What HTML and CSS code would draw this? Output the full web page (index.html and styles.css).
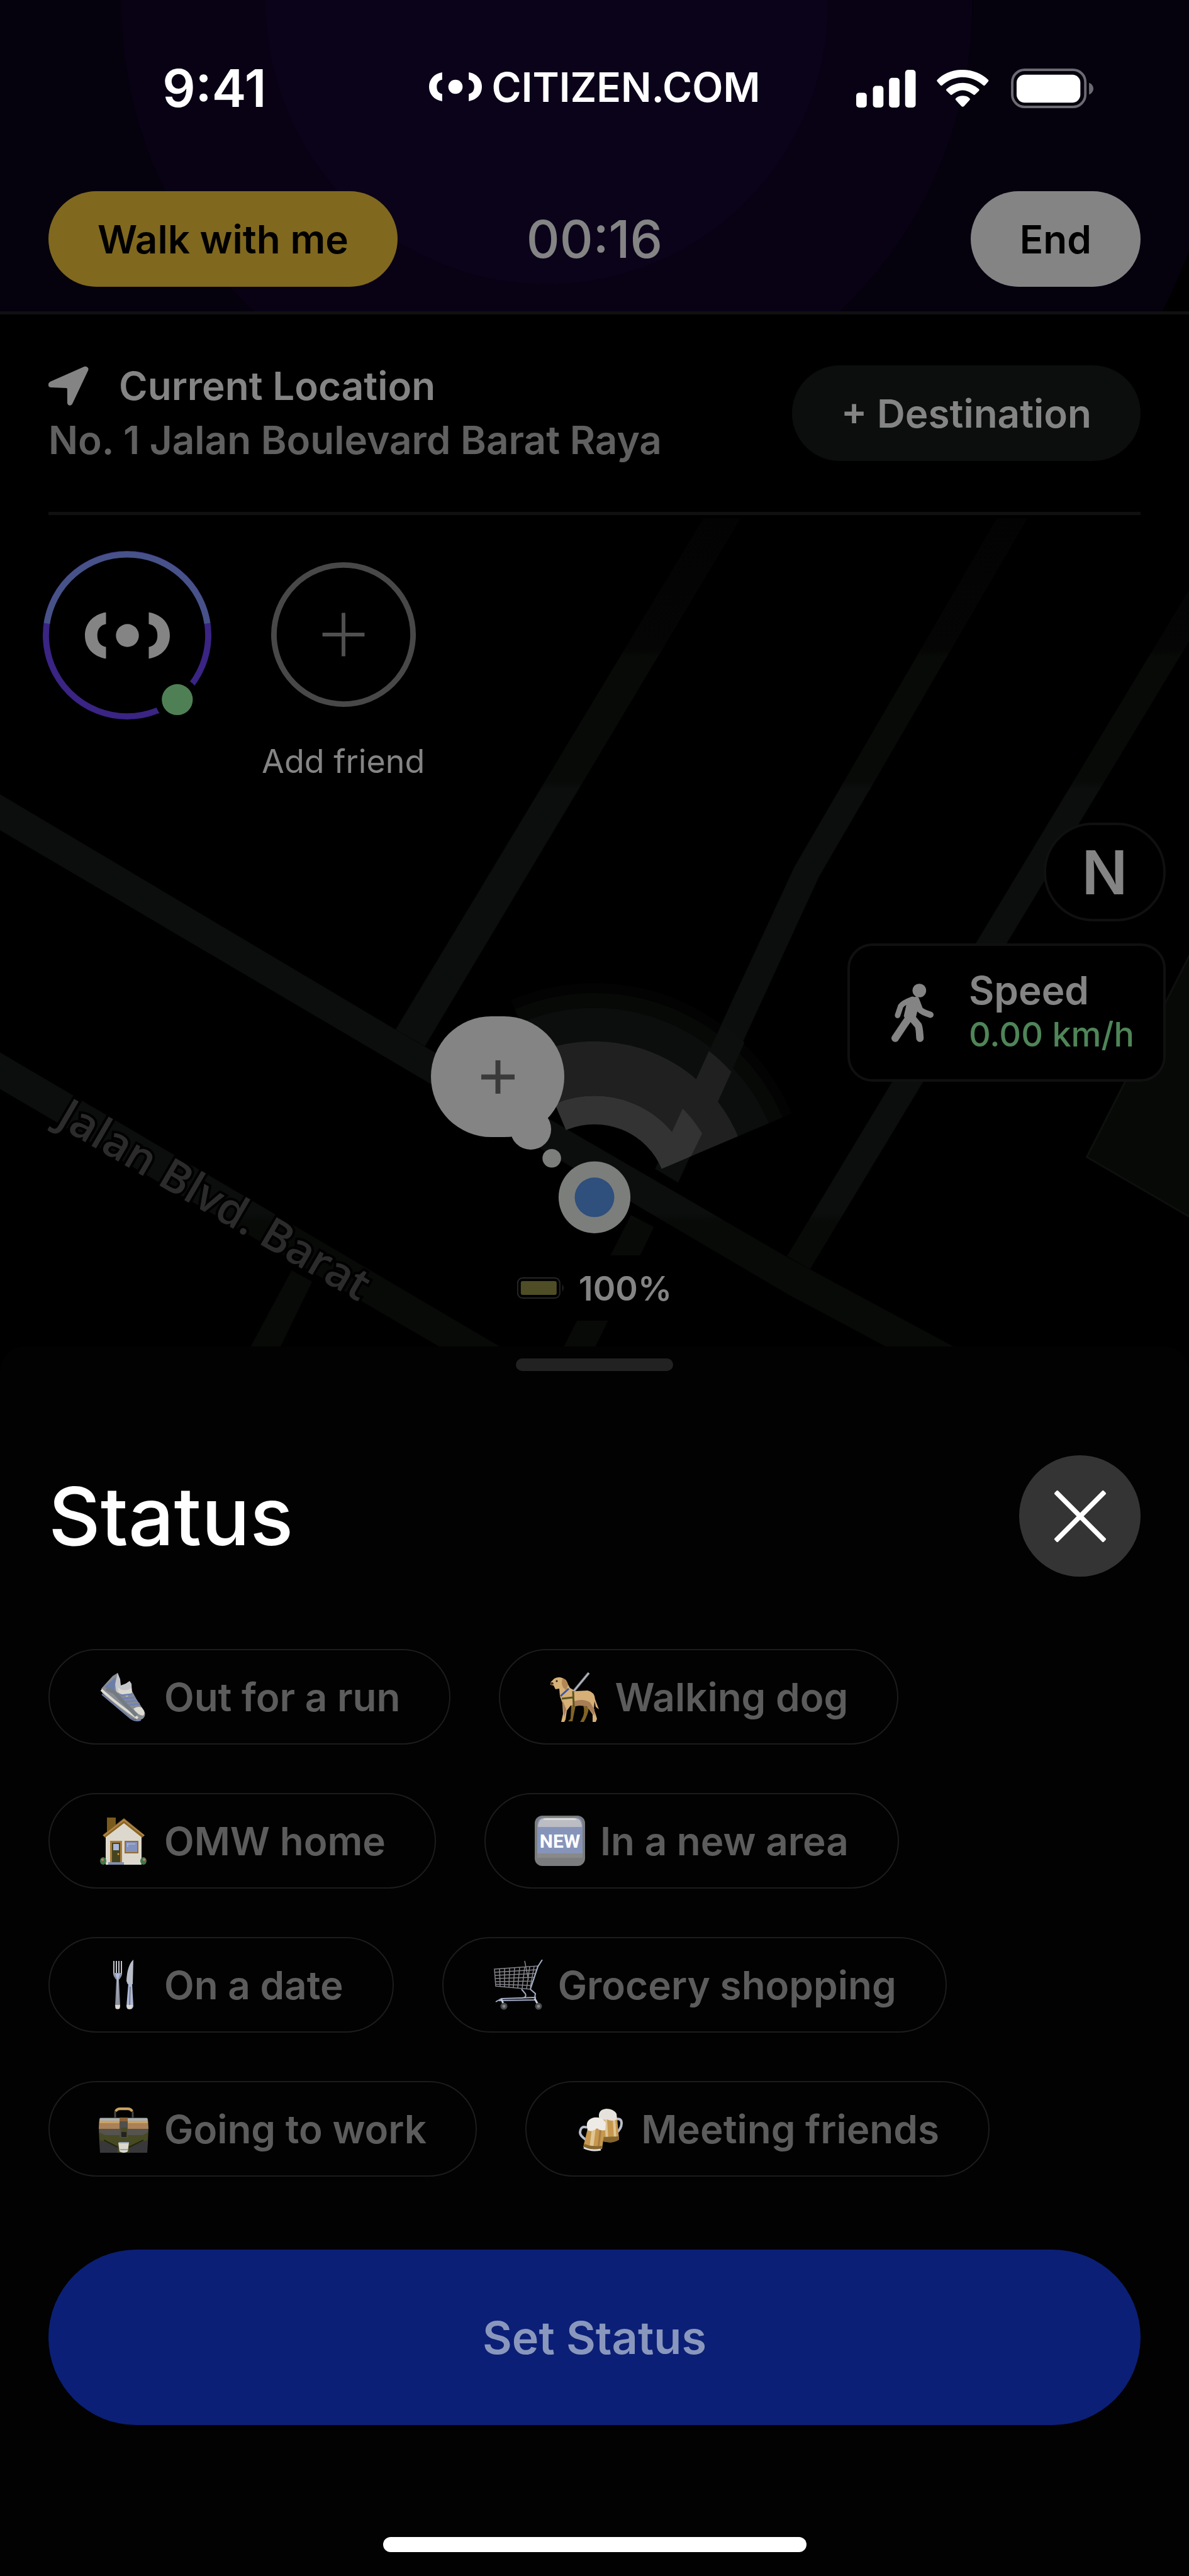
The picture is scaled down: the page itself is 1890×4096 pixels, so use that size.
FILE: index.html
```html
<!DOCTYPE html>
<html lang="en">
<head>
    <meta charset="UTF-8">
    <meta name="viewport" content="width=device-width, initial-scale=1">
    <title>Citizen - Status</title>
    <link rel="stylesheet" href="styles.css">
</head>
<body>
    <svg width="0" height="0" class="defs" aria-hidden="true">
        <symbol id="logo" viewBox="0 0 137 75">
            <path d="M34 0C12 4 0 19 0 37.500S12 71 34 75V56C24 54 20 47 20 37.500S24 21 34 19Z"/>
            <path d="M103 0c22 4 34 19 34 37.500S125 71 103 75V56c10-2 14-9 14-18.500S113 21 103 19Z"/>
            <circle cx="68.500" cy="37.500" r="18.500"/>
        </symbol>
    </svg>

    <header class="header">
        <svg class="rings" viewBox="0 0 1920 503" preserveAspectRatio="xMidYMin slice" aria-hidden="true">
            <circle cx="883" cy="5" r="1112" fill="#05010d"/>
            <circle cx="883" cy="5" r="687" fill="#090215"/>
            <circle cx="883" cy="5" r="454" fill="#0b031a"/>
        </svg>

        <div class="status-bar">
            <span class="time">9:41</span>
            <span class="brand">
                <svg class="brand-logo"><use href="#logo"/></svg>
                CITIZEN.COM
            </span>
            <svg class="system-icons" viewBox="0 0 383 64" aria-hidden="true">
                <g fill="#fff">
                    <rect x="0" y="39" width="17" height="24" rx="5"/>
                    <rect x="27" y="28" width="17" height="35" rx="5"/>
                    <rect x="53" y="15" width="17" height="48" rx="5"/>
                    <rect x="79" y="2" width="17" height="61" rx="5"/>
                    <path d="M172 2c-16 0-31 6-41 16-1 1-1 2 0 3l5 6c1 1 2 1 3 0 9-8 20-13 33-13s24 5 33 13c1 1 2 1 3 0l5-6c1-1 1-2 0-3-10-10-25-16-41-16z"/>
                    <path d="M172 23c-10 0-19 4-26 10-1 1-1 2 0 3l6 6c1 1 2 1 3 0 5-4 11-7 17-7s12 3 17 7c1 1 2 1 3 0l6-6c1-1 1-2 0-3-7-6-16-10-26-10z"/>
                    <path d="M172 44c-4 0-8 1-11 4-1 1-1 2 0 3l9 10c1 1 3 1 4 0l9-10c1-1 1-2 0-3-3-3-7-4-11-4z"/>
                    <rect x="259" y="10" width="103" height="45" rx="13"/>
                </g>
                <rect x="252" y="2" width="118" height="60" rx="20" fill="none" stroke="#6c6a72" stroke-width="4"/>
                <path d="M376 23c4 1 7 5 7 9.500s-3 8-7 9.500z" fill="#6c6a72"/>
            </svg>
        </div>

        <div class="actions">
            <button class="pill walk">Walk with me</button>
            <span class="timer">00:16</span>
            <button class="pill end">End</button>
        </div>
    </header>

    <section class="location">
        <div class="address">
            <div class="address-title">
                <svg viewBox="0 0 62 62" class="arrow" aria-hidden="true"><path d="M55 1 3 24c-5 3-4 9 1 9l23 1c2 0 2 1 2 2v21c1 5 6 5 8 1L61 7c2-4-2-7-6-6z"/></svg>
                Current Location
            </div>
            <div class="street">No. 1 Jalan Boulevard Barat Raya</div>
        </div>
        <button class="pill destination">+ Destination</button>
    </section>

    <main class="map">
        <svg class="map-canvas" viewBox="0 832 1920 1343" preserveAspectRatio="xMidYMin slice" aria-hidden="true">
            <defs>
                <linearGradient id="fade" x1="0" y1="832" x2="0" y2="2175" gradientUnits="userSpaceOnUse">
                    <stop offset="0" stop-color="#030303"/>
                    <stop offset="0.160" stop-color="#040504"/>
                    <stop offset="0.170" stop-color="#080a07"/>
                    <stop offset="0.320" stop-color="#080a08"/>
                    <stop offset="0.330" stop-color="#0c0e0e"/>
                    <stop offset="0.840" stop-color="#0c0e0e"/>
                    <stop offset="0.850" stop-color="#080a07"/>
                    <stop offset="1" stop-color="#080a07"/>
                </linearGradient>
                <!-- cone of view, opened 23 to 113 degrees -->
                <clipPath id="cone"><path d="M960 1934 804 1566 960 1500H1400V1747Z"/></clipPath>
                <clipPath id="side-street"><path d="M1283 1400 1322 1417 1249 1580 1159 1780 1095 1910 1058 1888 1148 1691 1201 1580Z"/></clipPath>
            </defs>

            <path class="park" d="M1925 1535 1755 1869 1925 1968Z"/>
            <g fill="url(#fade)">
                <path d="M1136 837H1196L686 1690 639 1663Z"/>
                <path d="M1610 837H1659L1322 1417 1095 1910 1058 1888 1148 1691 1283 1400Z"/>
                <path d="M1019 1963 1056 1982 959 2180H908Z"/>
                <path d="M1990 837H2040L1308 2050 1271 2029Z"/>
                <path d="M471 2052 504 2070 453 2175H405Z"/>
                <path d="M0 1283 640 1664 1268 2029 1545 2178H1436L1273 2091 0 1341Z"/>
                <path d="M0 1700 812 2178H714L0 1759Z"/>
            </g>

            <g clip-path="url(#cone)" fill="none">
                <circle cx="960" cy="1934" r="338" stroke="#030303" stroke-width="16"/>
                <circle cx="960" cy="1934" r="318" stroke="#070907" stroke-width="24"/>
                <circle cx="960" cy="1934" r="279" stroke="#0c0e0e" stroke-width="54"/>
                <circle cx="960" cy="1934" r="208" stroke="#202020" stroke-width="88"/>
                <circle cx="960" cy="1934" r="141" stroke="#333333" stroke-width="46"/>
                <g clip-path="url(#side-street)">
                    <circle cx="960" cy="1934" r="324" stroke="#0d0f0f" stroke-width="48"/>
                    <circle cx="960" cy="1934" r="250" stroke="#202020" stroke-width="100"/>
                    <circle cx="960" cy="1934" r="160" stroke="#333333" stroke-width="84"/>
                </g>
            </g>

            <text class="street-name" transform="translate(88 1816) rotate(30.300)">Jalan Blvd. Barat</text>

            <circle cx="857" cy="1824" r="33" fill="#848484"/>
            <circle cx="891" cy="1871" r="15" fill="#7c7e7c"/>
            <circle cx="960" cy="1934" r="58" fill="#7c7e7c"/>
            <circle cx="960" cy="1934" r="32" fill="#2f4f7c"/>
        </svg>

        <div class="friends">
            <svg class="avatar" viewBox="0 0 272 272" role="img" aria-label="You">
                <circle cx="136" cy="136" r="131" fill="#000" stroke="#3a2484" stroke-width="10"/>
                <path d="M6.500 117a131 131 0 0 1 259 0" fill="none" stroke="#475289" stroke-width="10"/>
                <circle cx="217" cy="240" r="36" fill="#000"/>
                <circle cx="217" cy="240" r="25" fill="#4f8055"/>
                <svg x="68" y="99" width="137" height="75" fill="#848484"><use href="#logo"/></svg>
            </svg>
            <button class="add-friend">
                <svg viewBox="0 0 234 234" class="add-circle" aria-hidden="true">
                    <circle cx="117" cy="117" r="112.500" fill="#000" stroke="#484848" stroke-width="9"/>
                    <path d="M83 117h68M117 82v70" stroke="#505050" stroke-width="6"/>
                </svg>
                Add friend
            </button>
        </div>

        <div class="map-controls">
            <button class="compass">N</button>
            <div class="speed">
                <svg viewBox="0 0 68 94" class="walker" fill="none" stroke="#848484" stroke-linecap="round" stroke-linejoin="round" aria-hidden="true">
                    <circle cx="45" cy="11" r="11" fill="#848484" stroke="none"/>
                    <path d="M34 24 40 23 43 30 38 52 34 56 25 57 22 52 27 30Z" fill="#848484" stroke-width="4"/>
                    <path d="M34 25Q18 31 15 36L10 51" stroke-width="9"/>
                    <path d="M40 26 46 42Q50 46 63 50" stroke-width="10"/>
                    <path d="M27 57 20 67 6 88" stroke-width="12"/>
                    <path d="M32 54 43 67Q45 70 46 88" stroke-width="12"/>
                </svg>
                <div>
                    <div class="speed-label">Speed</div>
                    <div class="speed-value">0.00 km/h</div>
                </div>
            </div>
        </div>

        <button class="bubble" aria-label="Add status">
            <svg viewBox="0 0 54 54" aria-hidden="true"><path d="M0 27h54M27 0v54" stroke="#3a3a3a" stroke-width="8"/></svg>
        </button>

        <div class="battery">
            <svg viewBox="0 0 76 34" aria-hidden="true">
                <rect x="1" y="1" width="67" height="32" rx="8" fill="none" stroke="#262626" stroke-width="2"/>
                <rect x="6" y="6" width="57" height="22" rx="3" fill="#4e4d26"/>
                <path d="M72 11q4 6 0 12z" fill="#262626"/>
            </svg>
            100%
        </div>
    </main>

    <section class="sheet">
        <div class="handle"></div>
        <div class="sheet-head">
            <h1>Status</h1>
            <button class="close" aria-label="Close">
                <svg viewBox="0 0 84 84" aria-hidden="true"><path d="M2 2 82 82M82 2 2 82" stroke="#fff" stroke-width="8"/></svg>
            </button>
        </div>

        <div class="chips">
            <button class="chip">
                <svg viewBox="0 0 80 80" aria-hidden="true">
                    <path d="M30 2 22 7 12 18 4 27Q4 34 10 39L50 73Q62 80 70 75 76 70 72 62L68 56 60 44 53 31 52 19 49 15 42 20 35 22Z" fill="#898d93"/>
                    <path d="M30 2 34 12 35 22 43 19 49 15 52 20 52 33 42 35 28 33 26 20Z" fill="#c4c6cc"/>
                    <path d="M27 9 25 30 15 28 9 24Z" fill="#6b7da8"/>
                    <path d="M30 24Q38 34 52 26L53 33 45 40 32 34Z" fill="#dcd9d1"/>
                    <path d="M4 29Q20 43 34 54T62 74" fill="none" stroke="#dedbd2" stroke-width="4"/>
                    <path d="M34 38 53 36M38 43 57 41M43 48 61 46M48 53 65 51" stroke="#7183b4" stroke-width="3"/>
                    <path d="M55 59Q62 54 68 57 76 66 70 70 62 69 55 59Z" fill="#dedbd2"/>
                    <path d="M12 27 25 33 45 55 60 70" fill="none" stroke="#737b83" stroke-width="6"/>
                    <path d="M5 36 50 74Q58 80 67 77" fill="none" stroke="#7484ad" stroke-width="2"/>
                </svg>
                Out for a run
            </button>
            <button class="chip">
                <svg viewBox="0 0 80 80" aria-hidden="true">
                    <path d="M54 53Q58 66 51 77L49 80H55Q62 68 63 57ZM35 52 34 75 30 79H37L42 54Z" fill="#816424"/>
                    <path d="M2 17 8 11Q17 6 26 13L33 26 42 31 61 30Q72 32 73 44L79 60 74 56 72 47 71 59 76 75 74 80H69L69 68 60 55 49 52 34 54 28 62 26 76 24 80H19L22 67 21 50 17 39 16 27 10 28 7 22 2 21Z" fill="#d6b077"/>
                    <path d="M21 11Q28 11 30 21L27 29Q20 26 20 17Z" fill="#b28655"/>
                    <path d="M40 47Q54 42 65 49L72 60 72 70 60 55 48 54 36 56ZM21 45 27 60 24 72Z" fill="#a87e56"/>
                    <path d="M18 39 31 27" stroke="#3d58a8" stroke-width="3"/>
                    <path d="M38 31 39 56M20 43 38 41" stroke="#5b5420" stroke-width="3"/>
                    <path d="M39 31 63 2" stroke="#8b8e95" stroke-width="4"/>
                    <path d="M39 31 63 2" stroke="#dde0e8" stroke-width="1"/>
                    <circle cx="12" cy="15" r="1.500" fill="#231b10"/>
                    <path d="M2 17h4l1 3-4 1z" fill="#3a2a1b"/>
                </svg>
                Walking dog
            </button>
            <button class="chip">
                <svg viewBox="0 0 80 80" aria-hidden="true">
                    <path d="M13 3H27V20L13 32Z" fill="#7a5a1d"/>
                    <path d="M11 30 40 8 68 30V78H11Z" fill="#ddd8cd"/>
                    <path d="M6 31 40 4 73 31 69 35 40 12 10 35Z" fill="#8a661f"/>
                    <path d="M8 32 40 7 72 32" fill="none" stroke="#b58755" stroke-width="2"/>
                    <path d="M18 40H37V75H18Z" fill="#a87c36"/>
                    <path d="M21 43H34V75H21Z" fill="#45441f"/>
                    <path d="M23 45H32V55H23Z" fill="#a9b7dc"/>
                    <circle cx="31" cy="61" r="1.500" fill="#d0a050"/>
                    <path d="M41 40H63V60H41Z" fill="#9a6d2b"/>
                    <path d="M43 42H61V58H43Z" fill="#8291bd"/>
                    <path d="M45 45H58M46 44V50" stroke="#c2cae4" stroke-width="1"/>
                    <path d="M15 74H40V78H15Z" fill="#8291b0"/>
                    <ellipse cx="7" cy="72" rx="5" ry="6" fill="#42774a"/>
                    <ellipse cx="71" cy="72" rx="5" ry="6" fill="#42774a"/>
                    <circle cx="6" cy="70" r="2" fill="#c27c67"/>
                    <circle cx="72" cy="70" r="2" fill="#c27c67"/>
                </svg>
                OMW home
            </button>
            <button class="chip">
                <svg viewBox="0 0 80 80" aria-hidden="true">
                    <rect width="80" height="80" rx="12" fill="#7a7c7d"/>
                    <path d="M4 14Q5 3 15 3H65Q75 3 76 14V60H4Z" fill="#8794ba"/>
                    <path d="M5 18Q6 4 16 4H64Q74 4 75 18Z" fill="#bbbdc3"/>
                    <path d="M13 7Q15 4 18 4H62Q65 4 67 7Z" fill="#ddd9d1"/>
                    <path d="M4 60H76V67H4Z" fill="#898989"/>
                    <text x="40" y="51" text-anchor="middle" class="new-text">NEW</text>
                </svg>
                In a new area
            </button>
            <button class="chip">
                <svg viewBox="0 0 80 80" aria-hidden="true">
                    <path d="M24 2V22Q25 29 30 29T36 22V2M28 2V23M32 2V23" fill="none" stroke="#c1c4cb" stroke-width="2"/>
                    <path d="M24 21H36Q36 29 32 32L34 74Q34 79 30 79T26 74L28 32Q24 29 24 21Z" fill="#8c919d"/>
                    <path d="M26 22H34L31 31 30 70 29 31Z" fill="#aebce0"/>
                    <path d="M55 0Q45 9 44 34L46 39H54Z" fill="#b9bec8"/>
                    <path d="M47 38H53L55 74Q54 79 49 79T44 74Z" fill="#aeb9d8"/>
                    <path d="M50 43 49 73" stroke="#7a7f89" stroke-width="2"/>
                    <path d="M26 72H34L33 78H27ZM44 72H54L52 78H46Z" fill="#ded8cf"/>
                </svg>
                On a date
            </button>
            <button class="chip">
                <svg viewBox="0 0 80 80" fill="none" stroke="#85868b" stroke-width="1.500" aria-hidden="true">
                    <path d="M3 15 72 10 60 47 5 42ZM3 20 70 16M3 25 69 22M4 30 67 28M4 35 65 34M5 39 63 41"/>
                    <path d="M11 14 12 43M19 14 19 43M27 13 26 44M35 13 33 45M43 12 40 45M51 12 47 46M59 11 54 46M66 11 60 44M51 2 57 32"/>
                    <path d="M79 0 72 11 60 47M46 47 52 54Q55 61 45 61M60 47 68 54 67 61M5 67 14 62 68 60 67 64 10 65" stroke="#a3adc5" stroke-width="2"/>
                    <path d="M14 63 18 72M67 62 72 71" stroke="#c8cedb" stroke-width="3"/>
                    <circle cx="18" cy="74" r="4" fill="#85868b" stroke="#4b4c4f" stroke-width="3"/>
                    <circle cx="73" cy="74" r="4" fill="#85868b" stroke="#4b4c4f" stroke-width="3"/>
                </svg>
                Grocery shopping
            </button>
            <button class="chip">
                <svg viewBox="0 0 80 80" aria-hidden="true">
                    <path d="M26 22V13Q27 9 33 9H47Q53 10 54 14V22" fill="none" stroke="#4a4640" stroke-width="3"/>
                    <path d="M27 12Q29 8 34 8H46Q51 8 53 12" fill="none" stroke="#cba263" stroke-width="4"/>
                    <path d="M1 24Q1 22 4 22H75Q78 22 78 24L79 42 77 78H2L0 42Z" fill="#474a23"/>
                    <path d="M1 24H78L79 40Q40 44 0 40Z" fill="#ab8157"/>
                    <path d="M2 23H77V27H2Z" fill="#a9b0ba"/>
                    <path d="M1 27H78V31H1Z" fill="#cba263"/>
                    <path d="M1 40H78V46L70 50H10L1 46Z" fill="#54534e"/>
                    <path d="M2 58 31 69 29 78H2ZM77 58 48 69 49 78H77Z" fill="#38373a"/>
                    <path d="M8 58 30 69M71 58 48 69" stroke="#24260e" stroke-width="2"/>
                    <path d="M33 24H46V54H33Z" fill="#514f4c"/>
                    <path d="M33 22H46V28H33Z" fill="#8b6238"/>
                    <path d="M35 38H45V53H35Z" fill="#4a4a27"/>
                    <path d="M36 45H44V53H36Z" fill="#222"/>
                    <path d="M31 62H48L46 76Q40 80 33 76Z" fill="#ddd8cd"/>
                    <path d="M32 62H48M34 73H46" stroke="#9ca5b8" stroke-width="2"/>
                </svg>
                Going to work
            </button>
            <button class="chip">
                <svg viewBox="0 0 80 80" aria-hidden="true">
                    <path d="M63 25Q73 22 73 31 73 40 64 47" fill="none" stroke="#b8bdc9" stroke-width="4"/>
                    <path d="M38 23H66L69 57Q59 64 44 60Z" fill="#c6984e"/>
                    <path d="M48 24 50 59M61 23 63 57" stroke="#e0c696" stroke-width="4"/>
                    <path d="M42 53 44 60Q59 64 69 57L68 52Z" fill="#86662d"/>
                    <path d="M37 21Q36 9 49 8 60 8 65 16L66 25Q58 29 50 25L39 26Z" fill="#e5e1dc"/>
                    <path d="M18 38Q8 34 7 46 7 51 16 57" fill="none" stroke="#b8bdc9" stroke-width="4"/>
                    <path d="M20 36H47L42 72Q26 77 12 69Z" fill="#c6984e"/>
                    <path d="M29 38 25 70" stroke="#e0c696" stroke-width="6"/>
                    <path d="M40 38 36 71" stroke="#a87c42" stroke-width="3"/>
                    <path d="M14 64Q27 69 42 67L41 72Q26 77 12 69Z" fill="#86662d"/>
                    <path d="M13 70Q25 76 40 73" fill="none" stroke="#dfdfe3" stroke-width="3"/>
                    <path d="M18 38Q16 25 29 22 43 20 48 31L47 42Q40 44 34 39 25 46 19 42Z" fill="#eeebe7"/>
                </svg>
                Meeting friends
            </button>
        </div>

        <button class="set-status">Set Status</button>
        <div class="home-indicator"></div>
    </section>
</body>
</html>
```

FILE: styles.css
```css
* {
    box-sizing: border-box;
}

body {
    margin: 0;
    min-height: 100vh;
    display: flex;
    flex-direction: column;
    background: #000;
    color: #848484;
    font-family: Inter, "Liberation Sans", sans-serif;
    font-size: 62px;
    font-weight: 600;
}

button {
    border: none;
    margin: 0;
    padding: 0;
    background: none;
    color: inherit;
    font: inherit;
    white-space: nowrap;
    cursor: pointer;
}

svg {
    display: block;
    flex-shrink: 0;
}

.defs {
    position: absolute;
}

/* Header */
.header {
    position: relative;
    padding-bottom: 39px;
    border-bottom: 5px solid #101010;
    overflow: hidden;
}

.rings {
    position: absolute;
    inset: 0;
    width: 100%;
    height: 100%;
}

.status-bar,
.actions {
    position: relative;
    display: grid;
    grid-template-columns: 1fr auto 1fr;
    align-items: center;
}

.status-bar {
    height: 280px;
    margin-bottom: 24px;
    justify-items: center;
    color: #fff;
}

.time {
    font-size: 82px;
}

.brand {
    display: flex;
    align-items: center;
    gap: 16px;
    padding-bottom: 4px;
    font-size: 64px;
}

.brand-logo {
    width: 84px;
    height: 46px;
    fill: #fff;
}

.system-icons {
    width: 377px;
    height: 63px;
}

.actions {
    padding: 0 77px;
}

.pill {
    height: 152px;
    padding: 0 78px;
    border-radius: 76px;
}

.walk {
    justify-self: start;
    background: #80681f;
    color: #000;
}

.timer {
    font-size: 82px;
    font-weight: 500;
}

.end {
    justify-self: end;
    background: #848484;
    color: #000;
}

/* Location */
.location {
    display: flex;
    align-items: center;
    justify-content: space-between;
    margin: 0 77px;
    padding: 71px 0;
    border-bottom: 5px solid #101010;
}

.address {
    line-height: 86px;
}

.address-title {
    display: flex;
    align-items: center;
    gap: 48px;
}

.arrow {
    width: 64px;
    height: 64px;
    fill: #848484;
}

.street {
    color: #606060;
}

.destination {
    background: #0c0e0e;
}

/* Map */
.map {
    position: relative;
    flex: 1;
    min-height: 1200px;
    overflow: hidden;
}

.map-canvas {
    position: absolute;
    inset: 0;
    width: 100%;
    height: 100%;
}

.park {
    fill: #070906;
    stroke: #0e100e;
    stroke-width: 3px;
}

.street-name {
    fill: #2b2b2b;
    stroke: #000;
    stroke-width: 8px;
    paint-order: stroke;
    font-family: "Open Sans", "Noto Sans", sans-serif;
    font-size: 72px;
    font-weight: 600;
}

.friends {
    position: relative;
    display: flex;
    align-items: flex-start;
    gap: 80px;
    padding: 57px 68px;
}

.avatar {
    width: 268px;
    height: 268px;
}

.add-friend {
    padding-top: 18px;
    font-size: 52px;
    font-weight: 400;
    line-height: 60px;
}

.add-circle {
    width: 230px;
    height: 230px;
    margin: 0 auto 57px;
}

.map-controls {
    position: absolute;
    top: 489px;
    right: 37px;
    display: flex;
    flex-direction: column;
    align-items: flex-end;
    gap: 35px;
}

.compass {
    width: 194px;
    height: 157px;
    border: 4px solid #101010;
    border-radius: 78px;
    background: #000;
    font-size: 96px;
}

.speed {
    display: flex;
    align-items: center;
    gap: 56px;
    height: 220px;
    padding: 0 46px 0 66px;
    border: 4px solid #101010;
    border-radius: 40px;
    background: #000;
    line-height: 70px;
}

.walker {
    width: 67px;
    height: 93px;
}

.speed-value {
    color: #4f8558;
    font-size: 54px;
    font-weight: 500;
}

.bubble {
    position: absolute;
    top: 797px;
    left: calc(50% - 260px);
    display: flex;
    align-items: center;
    justify-content: center;
    width: 212px;
    height: 192px;
    border-radius: 96px;
    background: #848484;
}

.bubble svg {
    width: 53px;
    height: 53px;
}

.battery {
    position: absolute;
    top: 1177px;
    left: 50%;
    transform: translateX(-50%);
    display: flex;
    align-items: center;
    gap: 22px;
    height: 104px;
    padding: 0 30px;
    background: #000;
    font-size: 54px;
}

.battery svg {
    width: 76px;
    height: 34px;
}

/* Bottom sheet */
.sheet {
    display: flex;
    flex-direction: column;
    padding: 19px 77px 38px;
    border-radius: 40px 40px 0 0;
    background: #020202;
}

.handle {
    align-self: center;
    width: 250px;
    height: 20px;
    border-radius: 10px;
    background: #222;
}

.sheet-head {
    display: flex;
    align-items: center;
    justify-content: space-between;
    margin: 134px 0 115px;
}

h1 {
    margin: 0;
    color: #fff;
    font-size: 128px;
    font-weight: 500;
    line-height: 160px;
}

.close {
    display: flex;
    align-items: center;
    justify-content: center;
    width: 193px;
    height: 193px;
    border-radius: 50%;
    background: #343434;
}

.close svg {
    width: 82px;
    height: 82px;
}

.chips {
    display: flex;
    flex-wrap: wrap;
    gap: 77px;
}

.chip {
    display: flex;
    align-items: center;
    gap: 24px;
    height: 152px;
    padding: 0 78px;
    border: 2px solid #1c1c1c;
    border-radius: 76px;
    color: #5c5c5c;
}

.chip svg {
    width: 80px;
    height: 80px;
}

.new-text {
    fill: #fff;
    font-family: Roboto, sans-serif;
    font-size: 30px;
    font-weight: 700;
}

.set-status {
    height: 279px;
    margin: 116px 0 178px;
    border-radius: 140px;
    background: #0b1f76;
    color: #8a97bd;
    font-size: 72px;
}

.home-indicator {
    align-self: center;
    width: 673px;
    height: 24px;
    border-radius: 12px;
    background: #fff;
}
```
